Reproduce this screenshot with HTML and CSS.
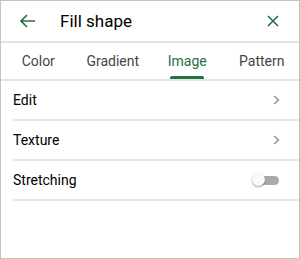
FILE: index.html
```html
<!DOCTYPE html>
<html>
<head>
<meta charset="utf-8">
<link rel="stylesheet" href="styles.css">
</head>
<body>
<div class="panel">
  <div class="header">
    <span class="icon-btn back">
      <svg width="16" height="14" viewBox="0 0 16 14"><path d="M7 1 L1 7 L7 13 M1 7 H15" fill="none" stroke="#217346" stroke-width="1.6"/></svg>
    </span>
    <span class="title">Fill shape</span>
    <span class="icon-btn close">
      <svg width="12" height="12" viewBox="0 0 12 12"><path d="M1 1 L11 11 M11 1 L1 11" fill="none" stroke="#217346" stroke-width="1.6"/></svg>
    </span>
  </div>
  <div class="tabs">
    <div class="tab">Color</div>
    <div class="tab">Gradient</div>
    <div class="tab active">Image</div>
    <div class="tab">Pattern</div>
  </div>
  <div class="list">
    <div class="row"><span>Edit</span><span class="chev"><svg width="7" height="10" viewBox="0 0 7 10"><path d="M1 1 L5.5 5 L1 9" fill="none" stroke="#8a8a8a" stroke-width="1.3"/></svg></span></div>
    <div class="row"><span>Texture</span><span class="chev"><svg width="7" height="10" viewBox="0 0 7 10"><path d="M1 1 L5.5 5 L1 9" fill="none" stroke="#8a8a8a" stroke-width="1.3"/></svg></span></div>
    <div class="row"><span>Stretching</span><span class="toggle"><span class="track"></span><span class="thumb"></span></span></div>
  </div>
</div>
</body>
</html>
```
FILE: styles.css
```css
html, body { margin: 0; padding: 0; background: #fff; }
.panel {
  width: 300px; height: 259px; box-sizing: border-box;
  border: 1px solid #c4c4c4;
  font-family: Roboto, "Liberation Sans", sans-serif;
  background: #fff;
}
.header {
  height: 40px; display: flex; align-items: center;
  border-bottom: 2px solid #e3e3e3;
}
.icon-btn { display: flex; align-items: center; justify-content: center; }
.back { width: 18px; margin-left: 18px; }
.title { font-size: 17px; color: #000; margin-left: 23px; flex: 1; }
.close { width: 12px; margin-right: 20px; }
.tabs {
  display: flex; height: 36px; border-bottom: 2px solid #e3e3e3;
}
.tab {
  flex: 1; display: flex; align-items: center; justify-content: center;
  font-size: 14px; color: #444; position: relative; padding-bottom: 0;
}
.tab.active { color: #217346; }
.tab.active::after {
  content: ""; position: absolute; bottom: 0; left: 50%;
  width: 34px; margin-left: -17px; height: 3px; background: #217346;
  border-radius: 2px 2px 0 0;
}
.list { padding-left: 12px; }
.row {
  height: 38px; display: flex; align-items: center; justify-content: space-between;
  border-bottom: 2px solid #e6e6e6; font-size: 14px; color: #000;
  padding-right: 19px;
}
.chev { display: flex; }
.toggle { position: relative; width: 28px; height: 14px; display: block; margin-right: 0; }
.track {
  position: absolute; left: 6px; top: 3px; width: 21px; height: 9px;
  background: #a9a9a9; border-radius: 5px;
}
.thumb {
  position: absolute; left: 0; top: 0; width: 13px; height: 13px; border-radius: 50%;
  background: #fafafa; box-shadow: 0 1px 2px rgba(0,0,0,0.4);
}
```
